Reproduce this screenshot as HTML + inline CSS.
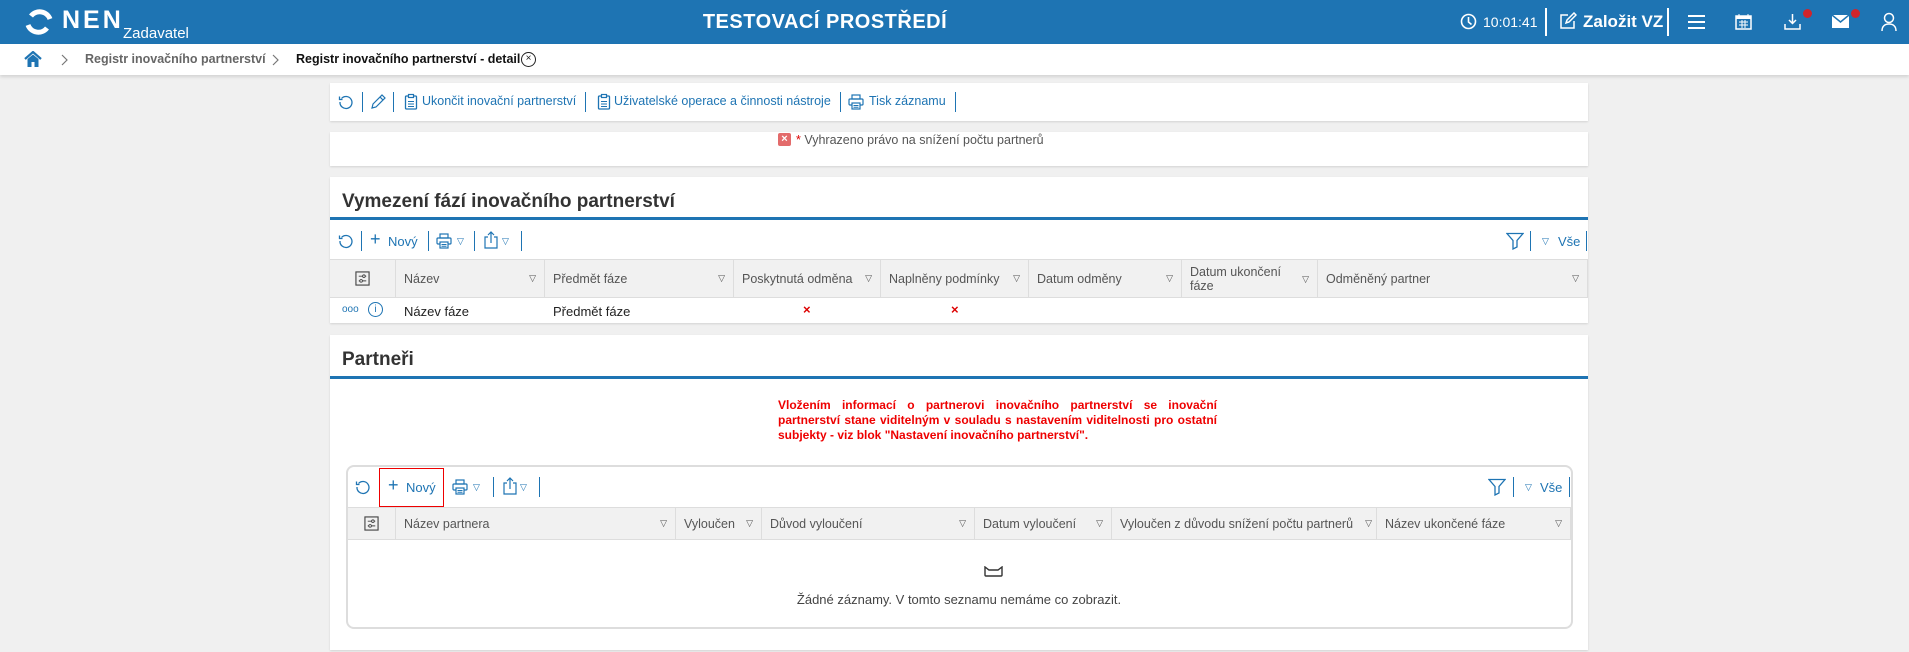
<!DOCTYPE html>
<html><head><meta charset="utf-8">
<style>
*{box-sizing:border-box;margin:0;padding:0}
body{width:1909px;height:652px;overflow:hidden;background:#f0f0f0;font-family:"Liberation Sans",sans-serif;font-size:13px;color:#222;position:relative}
.a{position:absolute}
.hdr{left:0;top:0;width:1909px;height:44px;background:#1e74b3;color:#fff}
.bc{left:0;top:44px;width:1909px;height:31px;background:#fff;box-shadow:0 2px 3px rgba(0,0,0,.12)}
.card{background:#fff;left:330px;width:1258px;box-shadow:0 1px 2px rgba(0,0,0,.12)}
.blue{color:#1e74b3}
.tb{font-size:12.5px}
.s{position:absolute;width:1px;height:20px;background:#1e74b3}
.t9{position:absolute;font-size:9px;color:#1e74b3}
.th{background:#f1f1f1;border-top:1px solid #ddd;border-bottom:1px solid #ddd;height:39px}
.th div{position:absolute;top:0;height:100%;border-right:1px solid #ddd;color:#555;padding-left:8px;display:flex;align-items:center;font-size:12.5px}
.th div span.t{position:absolute;right:8px;font-size:9px;color:#555}
.title{font-size:19px;font-weight:bold;color:#333}
</style></head><body>
<svg width="0" height="0" style="position:absolute">
<defs>
<symbol id="rl" viewBox="0 0 16 16"><path d="M3.5 4.5A6 6 0 1 1 2 8" fill="none" stroke="#1e74b3" stroke-width="1.3"/><path d="M1.5 2.5v3h3" fill="none" stroke="#1e74b3" stroke-width="1.3"/></symbol>
<symbol id="cb" viewBox="0 0 16 16"><rect x="2.5" y="2.5" width="11" height="13" rx="1" fill="none" stroke="#1e74b3" stroke-width="1.3"/><rect x="5.5" y="1" width="5" height="3" fill="#fff" stroke="#1e74b3" stroke-width="1.2"/><path d="M5 8h6M5 10.5h6M5 13h6" stroke="#1e74b3"/></symbol>
<symbol id="pr" viewBox="0 0 16 16"><rect x="4" y="1" width="8" height="4" fill="none" stroke="#1e74b3" stroke-width="1.2"/><rect x="1" y="5" width="14" height="6" rx="1" fill="none" stroke="#1e74b3" stroke-width="1.2"/><rect x="4" y="9" width="8" height="6" fill="#fff" stroke="#1e74b3" stroke-width="1.2"/><path d="M5.5 11.5h5M5.5 13.2h5" stroke="#1e74b3"/></symbol>
<symbol id="ex" viewBox="0 0 16 18"><path d="M5 6H2v11h12V6h-3M8 12V1M5 4l3-3 3 3" fill="none" stroke="#1e74b3" stroke-width="1.2"/></symbol>
<symbol id="fi" viewBox="0 0 18 18"><path d="M1 1.5h16l-6 7v6.5l-4 2V8.5z" fill="none" stroke="#1e74b3" stroke-width="1.3"/></symbol>
<symbol id="sl" viewBox="0 0 16 16"><rect x="1" y="1" width="14" height="14" fill="none" stroke="#444" stroke-width="1.2"/><path d="M4 5.5h8M4 10.5h8" stroke="#444"/><circle cx="9.5" cy="5.5" r="1.4" fill="#fff" stroke="#444"/><circle cx="6.5" cy="10.5" r="1.4" fill="#fff" stroke="#444"/></symbol>
</defs></svg>
<div class="a hdr">
 <svg class="a" style="left:24px;top:7px" width="30" height="30" viewBox="0 0 30 30"><path d="M7 9A11 11 0 0 1 26 12" fill="none" stroke="#fff" stroke-width="5"/><path d="M23 21A11 11 0 0 1 4 18" fill="none" stroke="#fff" stroke-width="5"/></svg>
 <div class="a" style="left:62px;top:6px;font-size:25px;font-weight:bold;letter-spacing:3px">NEN</div>
 <div class="a" style="left:123px;top:25px;font-size:15px">Zadavatel</div>
 <div class="a" style="left:570px;top:11px;width:510px;text-align:center;font-size:20px;font-weight:bold;letter-spacing:.5px">TESTOVACÍ PROSTŘEDÍ</div>
 <svg class="a" style="left:1460px;top:13px" width="17" height="17" viewBox="0 0 17 17"><circle cx="8.5" cy="8.5" r="7" fill="none" stroke="#fff" stroke-width="1.6"/><path d="M8.5 4v5l3 2.5" fill="none" stroke="#fff" stroke-width="1.6"/></svg>
 <div class="a" style="left:1483px;top:14px;font-size:14px">10:01:41</div>
 <div class="a" style="left:1545px;top:8px;width:2px;height:28px;background:#fff"></div>
 <svg class="a" style="left:1559px;top:12px" width="18" height="18" viewBox="0 0 18 18"><path d="M9 3H2v13h13V9" fill="none" stroke="#fff" stroke-width="1.5"/><path d="M7 11l1-3 7-7 2 2-7 7z" fill="none" stroke="#fff" stroke-width="1.5"/></svg>
 <div class="a" style="left:1583px;top:12px;font-size:17px;font-weight:bold">Založit VZ</div>
 <div class="a" style="left:1667px;top:8px;width:2px;height:28px;background:#fff"></div>
 <div class="a" style="left:1688px;top:15px;width:17px;height:2px;background:#fff;box-shadow:0 6px #fff,0 12px #fff"></div>
 <svg class="a" style="left:1735px;top:13px" width="17" height="17" viewBox="0 0 17 17"><rect x="1" y="3" width="15" height="13" fill="none" stroke="#fff" stroke-width="1.5"/><rect x="1" y="3" width="15" height="3" fill="#fff"/><path d="M4 1v3M13 1v3M4 9h9M4 12h9M7 7v8M10 7v8" stroke="#fff"/></svg>
 <svg class="a" style="left:1784px;top:13px" width="17" height="17" viewBox="0 0 17 17"><path d="M8.5 1v9M5 7l3.5 3.5L12 7M1 11v5h15v-5" fill="none" stroke="#fff" stroke-width="1.5"/></svg>
 <div class="a" style="left:1803px;top:9px;width:9px;height:9px;border-radius:50%;background:#d0242b"></div>
 <svg class="a" style="left:1832px;top:15px" width="17" height="13" viewBox="0 0 17 13"><rect width="17" height="13" fill="#fff"/><path d="M0 0l8.5 7L17 0" fill="none" stroke="#1e74b3" stroke-width="1.5"/></svg>
 <div class="a" style="left:1851px;top:9px;width:9px;height:9px;border-radius:50%;background:#d0242b"></div>
 <svg class="a" style="left:1881px;top:12px" width="16" height="20" viewBox="0 0 16 20"><circle cx="8" cy="6" r="4.5" fill="none" stroke="#fff" stroke-width="1.5"/><path d="M1 19c0-5 3-7 7-7s7 2 7 7" fill="none" stroke="#fff" stroke-width="1.5"/></svg>
</div>
<div class="a bc">
 <svg class="a" style="left:24px;top:7px" width="18" height="16" viewBox="0 0 18 16"><path d="M1 8L9 1l8 7" fill="none" stroke="#1e74b3" stroke-width="2.2"/><path d="M3.5 8v8h4v-5h3v5h4V8L9 3.5z" fill="#1e74b3"/></svg>
 <svg class="a" style="left:61px;top:10px" width="7" height="12" viewBox="0 0 7 12"><path d="M1 1l5 5-5 5" fill="none" stroke="#777" stroke-width="1.2"/></svg>
 <div class="a" style="left:85px;top:8px;color:#666;font-weight:bold;font-size:12.5px">Registr inovačního partnerství</div>
 <svg class="a" style="left:272px;top:10px" width="7" height="12" viewBox="0 0 7 12"><path d="M1 1l5 5-5 5" fill="none" stroke="#777" stroke-width="1.2"/></svg>
 <div class="a" style="left:296px;top:8px;color:#111;font-weight:bold;font-size:12.5px">Registr inovačního partnerství - detail</div>
 <div class="a" style="left:521px;top:8px;width:15px;height:15px;border:1.5px solid #222;border-radius:50%;font-size:10px;text-align:center;line-height:12px">×</div>
</div>

<div class="a card" style="top:83px;height:38px"></div>
<svg class="a" style="left:338px;top:94px" width="16" height="16"><use href="#rl"/></svg>
<div class="s" style="left:362px;top:92px"></div>
<svg class="a" style="left:370px;top:94px" width="16" height="16" viewBox="0 0 16 16"><path d="M2 14l1-4 9-9 3 3-9 9z M10 3l3 3" fill="none" stroke="#1e74b3" stroke-width="1.2"/></svg>
<div class="s" style="left:393px;top:92px"></div>
<svg class="a" style="left:403px;top:93px" width="16" height="17"><use href="#cb"/></svg>
<div class="a blue tb" style="left:422px;top:94px">Ukončit inovační partnerství</div>
<div class="s" style="left:585px;top:92px"></div>
<svg class="a" style="left:596px;top:93px" width="16" height="17"><use href="#cb"/></svg>
<div class="a blue tb" style="left:614px;top:94px">Uživatelské operace a činnosti nástroje</div>
<div class="s" style="left:840px;top:92px"></div>
<svg class="a" style="left:848px;top:94px" width="16" height="16"><use href="#pr"/></svg>
<div class="a blue tb" style="left:869px;top:94px">Tisk záznamu</div>
<div class="s" style="left:955px;top:92px"></div>

<div class="a card" style="top:132px;height:34px">
 <div class="a" style="left:448px;top:1px;width:13px;height:13px;background:#e36b6b;border-radius:2px;color:#fff;font-size:11px;text-align:center;line-height:13px;font-weight:bold">×</div>
 <div class="a" style="left:466px;top:1px;color:#555;font-size:12.5px"><span style="color:#d00">*</span> Vyhrazeno právo na snížení počtu partnerů</div>
</div>

<div class="a card" style="top:177px;height:146px">
 <div class="a title" style="left:12px;top:14px">Vymezení fází inovačního partnerství</div>
 <div class="a" style="left:0;top:40px;width:100%;height:3px;background:#1e74b3"></div>
 <div class="a th" style="left:0;top:82px;width:1258px">
  <div style="left:0;width:66px;justify-content:center;padding:0"><svg width="15" height="15"><use href="#sl"/></svg></div>
  <div style="left:66px;width:149px">Název<span class="t">▽</span></div>
  <div style="left:215px;width:189px">Předmět fáze<span class="t">▽</span></div>
  <div style="left:404px;width:147px">Poskytnutá odměna<span class="t">▽</span></div>
  <div style="left:551px;width:148px">Naplněny podmínky<span class="t">▽</span></div>
  <div style="left:699px;width:153px">Datum odměny<span class="t">▽</span></div>
  <div style="left:852px;width:136px;line-height:14px">Datum ukončení<br>fáze<span class="t">▽</span></div>
  <div style="left:988px;width:270px">Odměněný partner<span class="t">▽</span></div>
 </div>
 <div class="a blue" style="left:12px;top:127px;font-size:10px">ooo</div>
 <div class="a" style="left:38px;top:125px;width:15px;height:15px;border:1.3px solid #1e74b3;border-radius:50%;color:#1e74b3;font-size:10px;text-align:center;line-height:13px">i</div>
 <div class="a" style="left:74px;top:127px">Název fáze</div>
 <div class="a" style="left:223px;top:127px">Předmět fáze</div>
 <div class="a" style="left:473px;top:125px;color:#d00;font-weight:bold">×</div>
 <div class="a" style="left:621px;top:125px;color:#d00;font-weight:bold">×</div>
</div>
<svg class="a" style="left:338px;top:233px" width="16" height="16"><use href="#rl"/></svg>
<div class="s" style="left:361px;top:231px"></div>
<div class="a blue" style="left:370px;top:230px;font-size:18px;line-height:18px">+</div>
<div class="a blue" style="left:388px;top:234px">Nový</div>
<div class="s" style="left:428px;top:231px"></div>
<svg class="a" style="left:436px;top:233px" width="16" height="16"><use href="#pr"/></svg>
<div class="t9" style="left:457px;top:236px">▽</div>
<div class="s" style="left:474px;top:231px"></div>
<svg class="a" style="left:483px;top:231px" width="16" height="18"><use href="#ex"/></svg>
<div class="t9" style="left:502px;top:236px">▽</div>
<div class="s" style="left:521px;top:231px"></div>
<svg class="a" style="left:1506px;top:232px" width="18" height="18"><use href="#fi"/></svg>
<div class="s" style="left:1530px;top:231px"></div>
<div class="t9" style="left:1542px;top:236px">▽</div>
<div class="a blue" style="left:1558px;top:234px">Vše</div>
<div class="s" style="left:1586px;top:231px"></div>

<div class="a card" style="top:335px;height:315px">
 <div class="a title" style="left:12px;top:14px">Partneři</div>
 <div class="a" style="left:0;top:41px;width:100%;height:3px;background:#1e74b3"></div>
 <div class="a" style="left:448px;top:63px;width:439px;color:#e00;font-weight:bold;font-size:12px;line-height:15px;text-align:justify">Vložením informací o partnerovi inovačního partnerství se inovační partnerství stane viditelným v souladu s nastavením viditelnosti pro ostatní subjekty - viz blok "Nastavení inovačního partnerství".</div>
 <div class="a" style="left:16px;top:130px;width:1227px;height:164px;border:2px solid #ddd;border-radius:8px"></div>
 <div class="a th" style="left:18px;top:172px;width:1223px;height:33px">
  <div style="left:0;width:48px;justify-content:center;padding:0"><svg width="15" height="15"><use href="#sl"/></svg></div>
  <div style="left:48px;width:280px">Název partnera<span class="t">▽</span></div>
  <div style="left:328px;width:86px">Vyloučen<span class="t">▽</span></div>
  <div style="left:414px;width:213px">Důvod vyloučení<span class="t">▽</span></div>
  <div style="left:627px;width:137px">Datum vyloučení<span class="t">▽</span></div>
  <div style="left:764px;width:265px;white-space:nowrap">Vyloučen z důvodu snížení počtu partnerů<span class="t" style="right:4px">▽</span></div>
  <div style="left:1029px;width:194px">Název ukončené fáze<span class="t">▽</span></div>
 </div>
 <svg class="a" style="left:654px;top:231px" width="19" height="11" viewBox="0 0 19 11"><path d="M1 1v8q0 1 1 1h15q1 0 1-1V1l-4 3H5z" fill="none" stroke="#333" stroke-width="1.4"/></svg>
 <div class="a" style="left:0;width:1258px;top:257px;text-align:center;color:#444">Žádné záznamy. V tomto seznamu nemáme co zobrazit.</div>
</div>
<div class="a" style="left:379px;top:468px;width:65px;height:39px;border:1px solid #e00"></div>
<svg class="a" style="left:355px;top:479px" width="16" height="16"><use href="#rl"/></svg>
<div class="a blue" style="left:388px;top:476px;font-size:18px;line-height:18px">+</div>
<div class="a blue" style="left:406px;top:480px">Nový</div>
<svg class="a" style="left:452px;top:479px" width="16" height="16"><use href="#pr"/></svg>
<div class="t9" style="left:473px;top:482px">▽</div>
<div class="s" style="left:493px;top:477px"></div>
<svg class="a" style="left:502px;top:477px" width="16" height="18"><use href="#ex"/></svg>
<div class="t9" style="left:520px;top:482px">▽</div>
<div class="s" style="left:539px;top:477px"></div>
<svg class="a" style="left:1488px;top:478px" width="18" height="18"><use href="#fi"/></svg>
<div class="s" style="left:1513px;top:477px"></div>
<div class="t9" style="left:1525px;top:482px">▽</div>
<div class="a blue" style="left:1540px;top:480px">Vše</div>
<div class="s" style="left:1569px;top:477px"></div>
</body></html>
